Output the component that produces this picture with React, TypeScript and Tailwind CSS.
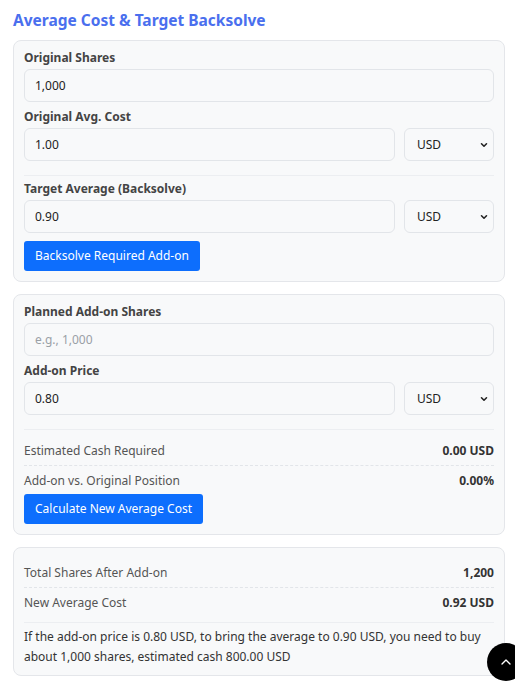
import { ChevronUp } from "lucide-react";

function Label({ children }: { children: React.ReactNode }) {
  return <div className="mb-[4px] text-[12px] font-bold leading-[14px] text-[#444]">{children}</div>;
}

function Input({ value, placeholder }: { value?: string; placeholder?: string }) {
  return (
    <input
      readOnly
      defaultValue={value}
      placeholder={placeholder}
      className="block h-[33px] w-full rounded-[6px] border border-[#e2e5e9] bg-[#f8f9fa] px-[10px] text-[12px] text-[#222] placeholder:text-[#9aa0a6] outline-none"
    />
  );
}

function PriceRow({ value }: { value: string }) {
  return (
    <div className="flex gap-[9px]">
      <div className="flex-1">
        <Input value={value} />
      </div>
      <div className="flex h-[33px] w-[90px] items-center justify-between rounded-[6px] border border-[#e2e5e9] bg-[#f8f9fa] pl-[12px] pr-[4px] text-[12px] text-[#222]">
        <span>USD</span>
        <svg width="10" height="10" viewBox="0 0 16 16" fill="none" stroke="#222" strokeWidth="2.5" strokeLinecap="round" strokeLinejoin="round">
          <path d="M4 6l4 4 4-4" />
        </svg>
      </div>
    </div>
  );
}

function Stat({ label, value, dashed }: { label: string; value: string; dashed?: boolean }) {
  return (
    <div className={"flex h-[30px] items-center justify-between text-[12px] leading-[16px] " + (dashed ? "border-b border-dashed border-[#e2e5e9]" : "")}>
      <span className="text-[#555]">{label}</span>
      <span className="font-bold text-[#333]">{value}</span>
    </div>
  );
}

function Button({ children }: { children: React.ReactNode }) {
  return (
    <button className="h-[30px] rounded-[3px] bg-[#0d6efd] px-[11px] text-[12px] text-white">{children}</button>
  );
}

export default function App() {
  return (
    <main
      className="min-h-[686px] bg-white pl-[13px] pr-[10px] pt-[9px]"
      style={{ fontFamily: '"Segoe UI", "Noto Sans", sans-serif' }}
    >
      <h1 className="text-[15.5px] font-bold leading-[22px] text-[#4a6fee]">Average Cost &amp; Target Backsolve</h1>

      <section className="mt-[9px] rounded-[8px] border border-[#e4e6ea] bg-[#f8f9fa] px-[10px] pt-[10px] pb-[10px]">
        <Label>Original Shares</Label>
        <Input value="1,000" />
        <div className="mt-[8px]">
          <Label>Original Avg. Cost</Label>
          <PriceRow value="1.00" />
        </div>
        <div className="mt-[14px] border-t border-[#eceef1] pt-[6px]">
          <Label>Target Average (Backsolve)</Label>
          <PriceRow value="0.90" />
        </div>
        <div className="mt-[8px]">
          <Button>Backsolve Required Add-on</Button>
        </div>
      </section>

      <section className="mt-[12px] rounded-[8px] border border-[#e4e6ea] bg-[#f8f9fa] px-[10px] pt-[10px] pb-[10px]">
        <Label>Planned Add-on Shares</Label>
        <Input placeholder="e.g., 1,000" />
        <div className="mt-[8px]">
          <Label>Add-on Price</Label>
          <PriceRow value="0.80" />
        </div>
        <div className="mt-[14px] border-t border-[#eceef1] pt-[6px]">
          <Stat label="Estimated Cash Required" value="0.00 USD" dashed />
          <Stat label="Add-on vs. Original Position" value="0.00%" />
        </div>
        <div className="-mt-[2px]">
          <Button>Calculate New Average Cost</Button>
        </div>
      </section>

      <section className="mt-[12px] rounded-[8px] border border-[#e4e6ea] bg-[#f8f9fa] px-[10px] pt-[10px] pb-[8px]">
        <Stat label="Total Shares After Add-on" value="1,200" dashed />
        <Stat label="New Average Cost" value="0.92 USD" />
        <p className="mt-[4px] border-t border-[#eceef1] pt-[4px] text-[12px] leading-[20px] text-[#333]">
          If the add-on price is 0.80 USD, to bring the average to 0.90 USD, you need to buy about 1,000 shares, estimated cash 800.00 USD
        </p>
      </section>

      <button className="fixed right-[-10px] top-[643px] flex h-[38px] w-[38px] items-center justify-center rounded-full bg-black text-white">
        <ChevronUp size={16} strokeWidth={2} />
      </button>
    </main>
  );
}
